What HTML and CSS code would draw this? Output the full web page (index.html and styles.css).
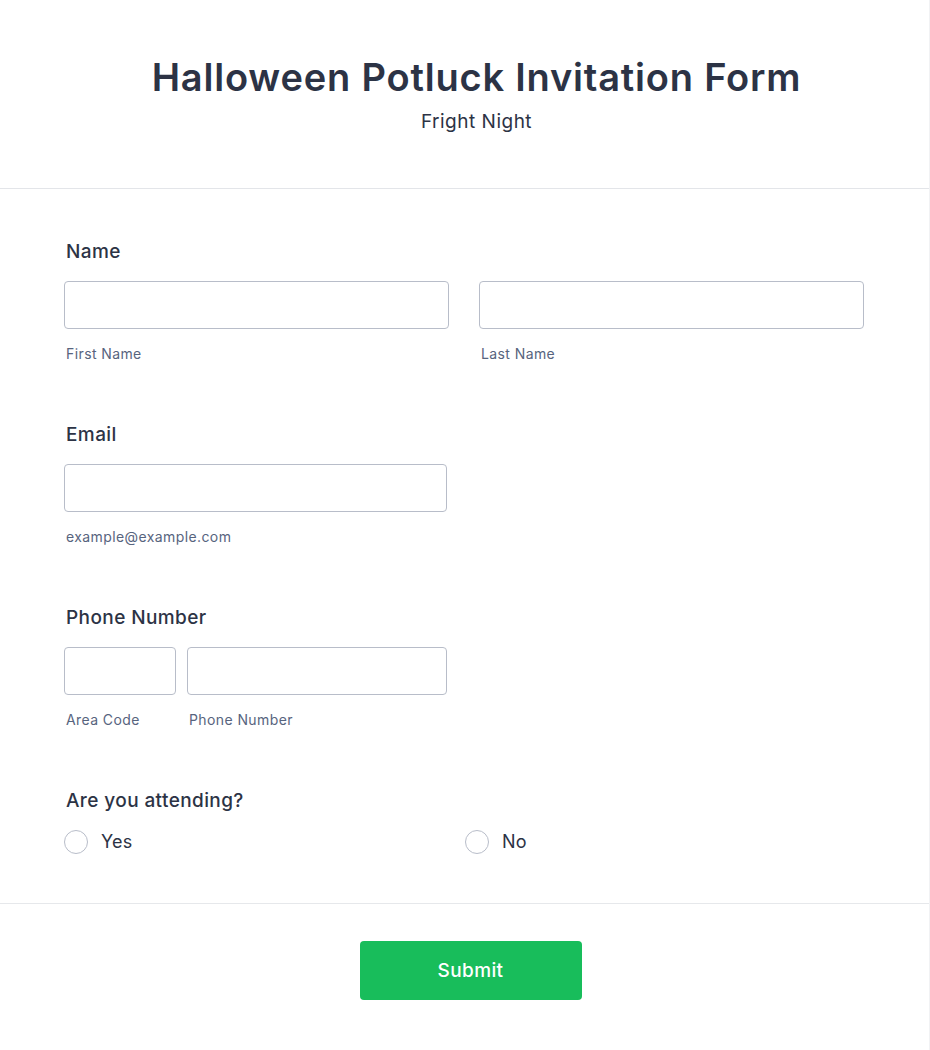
FILE: index.html
```html
<!DOCTYPE html>
<html lang="en">
<head>
<meta charset="utf-8">
<title>Halloween Potluck Invitation Form</title>
<link rel="stylesheet" href="styles.css">
</head>
<body>
<div class="card">
  <header class="header">
    <h1 class="title">Halloween Potluck Invitation Form</h1>
    <p class="subtitle">Fright Night</p>
  </header>
  <main class="fields">
    <div class="field">
      <div class="label">Name</div>
      <div class="row two">
        <div class="col"><div class="input"></div><div class="sub">First Name</div></div>
        <div class="col"><div class="input"></div><div class="sub">Last Name</div></div>
      </div>
    </div>
    <div class="field">
      <div class="label">Email</div>
      <div class="row email">
        <div class="col"><div class="input"></div><div class="sub">example@example.com</div></div>
      </div>
    </div>
    <div class="field">
      <div class="label">Phone Number</div>
      <div class="row phone">
        <div class="col area"><div class="input"></div><div class="sub">Area Code</div></div>
        <div class="col num"><div class="input"></div><div class="sub">Phone Number</div></div>
      </div>
    </div>
    <div class="field last">
      <div class="label">Are you attending?</div>
      <div class="radios">
        <div class="radio"><span class="circle"></span><span class="rtext">Yes</span></div>
        <div class="radio"><span class="circle"></span><span class="rtext">No</span></div>
      </div>
    </div>
  </main>
  <footer class="footer">
    <button class="submit" type="button">Submit</button>
  </footer>
</div>
</body>
</html>
```

FILE: styles.css
```css
* { box-sizing: border-box; }
html, body { margin: 0; padding: 0; background: #ffffff; }
body {
  font-family: Inter, "Noto Sans", sans-serif;
  color: #2c3345;
  width: 930px;
  height: 1050px;
  overflow: hidden;
}
.card {
  width: 930px;
  height: 1050px;
  background: #fff;
  border-right: 1px solid #f1f2f4;
}
.header {
  height: 189px;
  border-bottom: 1px solid #e3e5e9;
  text-align: center;
  padding: 53px 0 0 24px;
}
.title {
  margin: 0;
  font-size: 38px;
  line-height: 48px;
  font-weight: 600;
  color: #2c3345;
  letter-spacing: 0.8px;
}
.subtitle {
  margin: 9px 0 0;
  font-size: 19px;
  line-height: 24px;
  letter-spacing: 0.5px;
  color: #2c3345;
}
.fields {
  padding: 51px 65px 0 64px;
  height: 715px;
  border-bottom: 1px solid #e6e8eb;
}
.field { margin-bottom: 59px; }
.field.last { margin-bottom: 0; }
.label {
  font-size: 19px;
  line-height: 24px;
  font-weight: 500;
  letter-spacing: 0.4px;
  padding-left: 2px;
  margin-bottom: 17px;
}
.row { display: flex; gap: 30px; }
.row .col { flex: 1; }
.row.email { width: 383px; }
.row.phone { width: 383px; gap: 11px; }
.row.phone .area { flex: 0 0 112px; }
.row.phone .num { flex: 1; }
.input {
  height: 48px;
  border: 1px solid #b8bdc9;
  border-radius: 4px;
  background: #fff;
}
.sub {
  margin-top: 15px;
  font-size: 14px;
  line-height: 20px;
  letter-spacing: 0.4px;
  color: #57647e;
  padding-left: 2px;
}
.radios {
  display: flex;
  margin-top: 5px;
}
.radio {
  flex: 0 0 401px;
  display: flex;
  align-items: center;
  gap: 13px;
}
.circle {
  width: 24px;
  height: 24px;
  border: 1px solid #b8bdc9;
  border-radius: 50%;
  background: #fff;
}
.rtext {
  font-size: 18px;
  line-height: 24px;
  letter-spacing: 0.2px;
  color: #2c3345;
}
.footer {
  display: flex;
  justify-content: center;
  padding: 37px 0 0 12px;
}
.submit {
  width: 222px;
  height: 59px;
  border: 0;
  border-radius: 4px;
  background: #18bd5b;
  color: #fff;
  font-family: Inter, "Noto Sans", sans-serif;
  font-size: 19px;
  font-weight: 500;
  letter-spacing: 0.4px;
}
```
